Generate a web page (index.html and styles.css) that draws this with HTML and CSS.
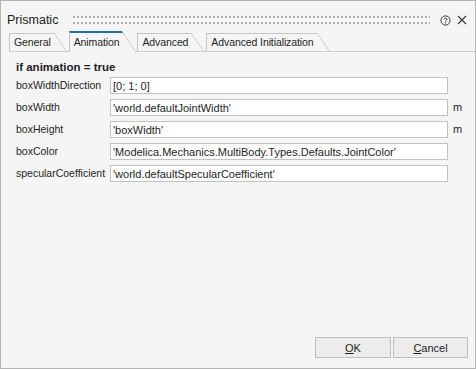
FILE: index.html
```html
<!DOCTYPE html>
<html lang="en">
<head>
    <meta charset="UTF-8">
    <title>Prismatic</title>
    <link rel="stylesheet" href="styles.css">
</head>
<body>
    <div class="dialog">
        <div class="titlebar">
            <span class="title">Prismatic</span>
            <div class="grip"></div>
            <svg class="help" width="11" height="11" viewBox="0 0 11 11">
                <circle cx="5.5" cy="5.5" r="4.6" fill="none" stroke="#333" stroke-width="1"/>
                <path d="M3.9 4.3 C3.9 2.9 7.1 2.9 7.1 4.3 C7.1 5.3 5.5 5.3 5.5 6.5" fill="none" stroke="#333" stroke-width="1"/>
                <rect x="5" y="7.4" width="1" height="1" fill="#333"/>
            </svg>
            <svg class="close" width="10" height="10" viewBox="0 0 10 10">
                <path d="M1 1 L9 9 M9 1 L1 9" stroke="#333" stroke-width="1.1"/>
            </svg>
        </div>

        <div class="tabs">
            <div class="tab">General</div>
            <div class="tab active">Animation</div>
            <div class="tab">Advanced</div>
            <div class="tab">Advanced Initialization</div>
        </div>

        <div class="panel">
            <div class="group">if animation = true</div>
            <div class="row">
                <label>boxWidthDirection</label>
                <input type="text" value="[0; 1; 0]">
                <span class="unit"></span>
            </div>
            <div class="row">
                <label>boxWidth</label>
                <input type="text" value="'world.defaultJointWidth'">
                <span class="unit">m</span>
            </div>
            <div class="row">
                <label>boxHeight</label>
                <input type="text" value="'boxWidth'">
                <span class="unit">m</span>
            </div>
            <div class="row">
                <label>boxColor</label>
                <input type="text" value="'Modelica.Mechanics.MultiBody.Types.Defaults.JointColor'">
                <span class="unit"></span>
            </div>
            <div class="row">
                <label>specularCoefficient</label>
                <input type="text" value="'world.defaultSpecularCoefficient'">
                <span class="unit"></span>
            </div>
        </div>

        <div class="footer">
            <button type="button" class="ok"><u>O</u>K</button>
            <button type="button" class="cancel"><u>C</u>ancel</button>
        </div>
    </div>
</body>
</html>
```

FILE: styles.css
```css
* {
    font-family: 'Liberation Sans', Arial, sans-serif;
    box-sizing: border-box;
}

body {
    margin: 0;
    background: #f5f5f5;
    color: #1e1e1e;
    font-size: 11px;
}

.dialog {
    width: 476px;
    height: 369px;
    border: 1px solid #b4b4b4;
    background: #f5f5f5;
    display: flex;
    flex-direction: column;
}

/* barra de titulo */
.titlebar {
    display: flex;
    align-items: center;
    height: 20px;
    margin-top: 9px;
    padding: 0 8px 0 6px;
}

.title {
    font-size: 12.5px;
    color: #222;
}

.grip {
    flex: 1;
    height: 8px;
    margin: 0 8px 0 15px;
    background-image:
        linear-gradient(90deg, #ababab 2px, transparent 2px),
        linear-gradient(90deg, #ababab 2px, transparent 2px);
    background-size: 4px 2px, 4px 2px;
    background-position: 0 0, 0 6px;
    background-repeat: repeat-x;
}

.help {
    margin-left: 2px;
}

.close {
    margin-left: 6px;
}

/* abas */
.tabs {
    display: flex;
    align-items: flex-end;
    height: 22px;
    margin-left: 8px;
    border-bottom: 1px solid #cfcfcf;
}

.tab {
    position: relative;
    height: 19px;
    margin-bottom: -1px;
    margin-right: 2px;
    padding: 2px 16px 0 4px;
    border-left: 1px solid #c4c4c4;
    border-top: 1px solid #c4c4c4;
    border-bottom: 1px solid #cfcfcf;
    color: #1e1e1e;
    font-size: 10.5px;
    letter-spacing: -0.1px;
    white-space: nowrap;
}

/* canto inclinado da aba */
.tab::after {
    content: '';
    position: absolute;
    top: -1px;
    right: 0;
    width: 13px;
    height: 19px;
    background: linear-gradient(to top right, transparent calc(50% - 0.7px), #c4c4c4 50%, #f5f5f5 calc(50% + 0.7px));
}

.tab.active {
    height: 21px;
    padding-top: 3px;
    border-top: 2px solid #1d6fa5;
    border-bottom-color: #f5f5f5;
}

.tab.active::after {
    top: -2px;
    height: 20px;
}

/* conteudo */
.panel {
    flex: 1;
    padding: 8px 0 0 15px;
}

.group {
    font-weight: bold;
    font-size: 11.5px;
    line-height: 14px;
    margin-bottom: 1px;
}

.row {
    display: flex;
    height: 22px;
    padding-top: 2px;
}

.row label {
    width: 94px;
    line-height: 17px;
    font-size: 10.5px;
}

.row input {
    width: 338px;
    height: 17px;
    border: 1px solid #c2c2c2;
    background: #fff;
    color: #1e1e1e;
    font-size: 11px;
    padding: 0 2px;
    margin: 0;
    outline: none;
}

.unit {
    margin-left: 5px;
    line-height: 17px;
}

.footer {
    display: flex;
    justify-content: flex-end;
    gap: 2px;
    padding: 0 7px 10px 0;
}

.footer button {
    height: 21px;
    margin: 0;
    padding: 0;
    border: 1px solid #bdbdbd;
    background: #ececec;
    color: #1e1e1e;
    font-size: 11px;
}

.footer .ok {
    width: 76px;
}

.footer .cancel {
    width: 75px;
}

.footer button u {
    text-decoration: underline;
}
```
